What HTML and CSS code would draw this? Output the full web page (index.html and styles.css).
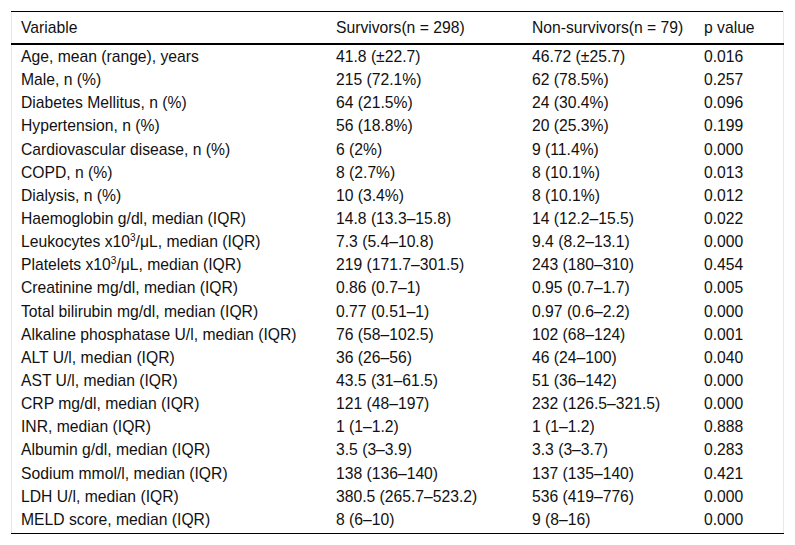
FILE: index.html
```html
<!DOCTYPE html>
<html>
<head>
<meta charset="utf-8">
<link rel="stylesheet" href="styles.css">
</head>
<body>
<table class="data">
<thead>
<tr><th class="c1">Variable</th><th class="c2">Survivors(n = 298)</th><th class="c3">Non-survivors(n = 79)</th><th class="c4">p value</th></tr>
</thead>
<tbody>
<tr><td>Age, mean (range), years</td><td>41.8 (±22.7)</td><td>46.72 (±25.7)</td><td>0.016</td></tr>
<tr><td>Male, n (%)</td><td>215 (72.1%)</td><td>62 (78.5%)</td><td>0.257</td></tr>
<tr><td>Diabetes Mellitus, n (%)</td><td>64 (21.5%)</td><td>24 (30.4%)</td><td>0.096</td></tr>
<tr><td>Hypertension, n (%)</td><td>56 (18.8%)</td><td>20 (25.3%)</td><td>0.199</td></tr>
<tr><td>Cardiovascular disease, n (%)</td><td>6 (2%)</td><td>9 (11.4%)</td><td>0.000</td></tr>
<tr><td>COPD, n (%)</td><td>8 (2.7%)</td><td>8 (10.1%)</td><td>0.013</td></tr>
<tr><td>Dialysis, n (%)</td><td>10 (3.4%)</td><td>8 (10.1%)</td><td>0.012</td></tr>
<tr><td>Haemoglobin g/dl, median (IQR)</td><td>14.8 (13.3–15.8)</td><td>14 (12.2–15.5)</td><td>0.022</td></tr>
<tr><td>Leukocytes x10<sup>3</sup>/μL, median (IQR)</td><td>7.3 (5.4–10.8)</td><td>9.4 (8.2–13.1)</td><td>0.000</td></tr>
<tr><td>Platelets x10<sup>3</sup>/μL, median (IQR)</td><td>219 (171.7–301.5)</td><td>243 (180–310)</td><td>0.454</td></tr>
<tr><td>Creatinine mg/dl, median (IQR)</td><td>0.86 (0.7–1)</td><td>0.95 (0.7–1.7)</td><td>0.005</td></tr>
<tr><td>Total bilirubin mg/dl, median (IQR)</td><td>0.77 (0.51–1)</td><td>0.97 (0.6–2.2)</td><td>0.000</td></tr>
<tr><td>Alkaline phosphatase U/l, median (IQR)</td><td>76 (58–102.5)</td><td>102 (68–124)</td><td>0.001</td></tr>
<tr><td>ALT U/l, median (IQR)</td><td>36 (26–56)</td><td>46 (24–100)</td><td>0.040</td></tr>
<tr><td>AST U/l, median (IQR)</td><td>43.5 (31–61.5)</td><td>51 (36–142)</td><td>0.000</td></tr>
<tr><td>CRP mg/dl, median (IQR)</td><td>121 (48–197)</td><td>232 (126.5–321.5)</td><td>0.000</td></tr>
<tr><td>INR, median (IQR)</td><td>1 (1–1.2)</td><td>1 (1–1.2)</td><td>0.888</td></tr>
<tr><td>Albumin g/dl, median (IQR)</td><td>3.5 (3–3.9)</td><td>3.3 (3–3.7)</td><td>0.283</td></tr>
<tr><td>Sodium mmol/l, median (IQR)</td><td>138 (136–140)</td><td>137 (135–140)</td><td>0.421</td></tr>
<tr><td>LDH U/l, median (IQR)</td><td>380.5 (265.7–523.2)</td><td>536 (419–776)</td><td>0.000</td></tr>
<tr><td>MELD score, median (IQR)</td><td>8 (6–10)</td><td>9 (8–16)</td><td>0.000</td></tr>
</tbody>
</table>
</body>
</html>
```
FILE: styles.css
```css
html, body {
  margin: 0;
  background: #fff;
}
body {
  padding: 11px 0 0 11px;
  font-family: "Liberation Sans", Arial, sans-serif;
  font-size: 15.7px;
  color: #111;
}
.data {
  width: 773px;
  border-collapse: collapse;
  border-top: 1px solid #000;
  border-bottom: 1px solid #000;
  border-left: 1px solid #e8e8e8;
  border-right: 1px solid #e8e8e8;
}
.data th {
  font-weight: normal;
  text-align: left;
  height: 31px;
  padding: 0 0 0 9px;
  border-bottom: 2px solid #000;
  vertical-align: middle;
}
.data td {
  height: 23.15px;
  padding: 0 0 0 9px;
  vertical-align: middle;
  line-height: 17px;
}
.data tbody tr:last-child td { padding-bottom: 2px; }
.c1 { width: 306px; }
.c2 { width: 187px; }
.c3 { width: 163px; }
.data sup {
  font-size: 10px;
  line-height: 0;
  vertical-align: 6px;
}
```
